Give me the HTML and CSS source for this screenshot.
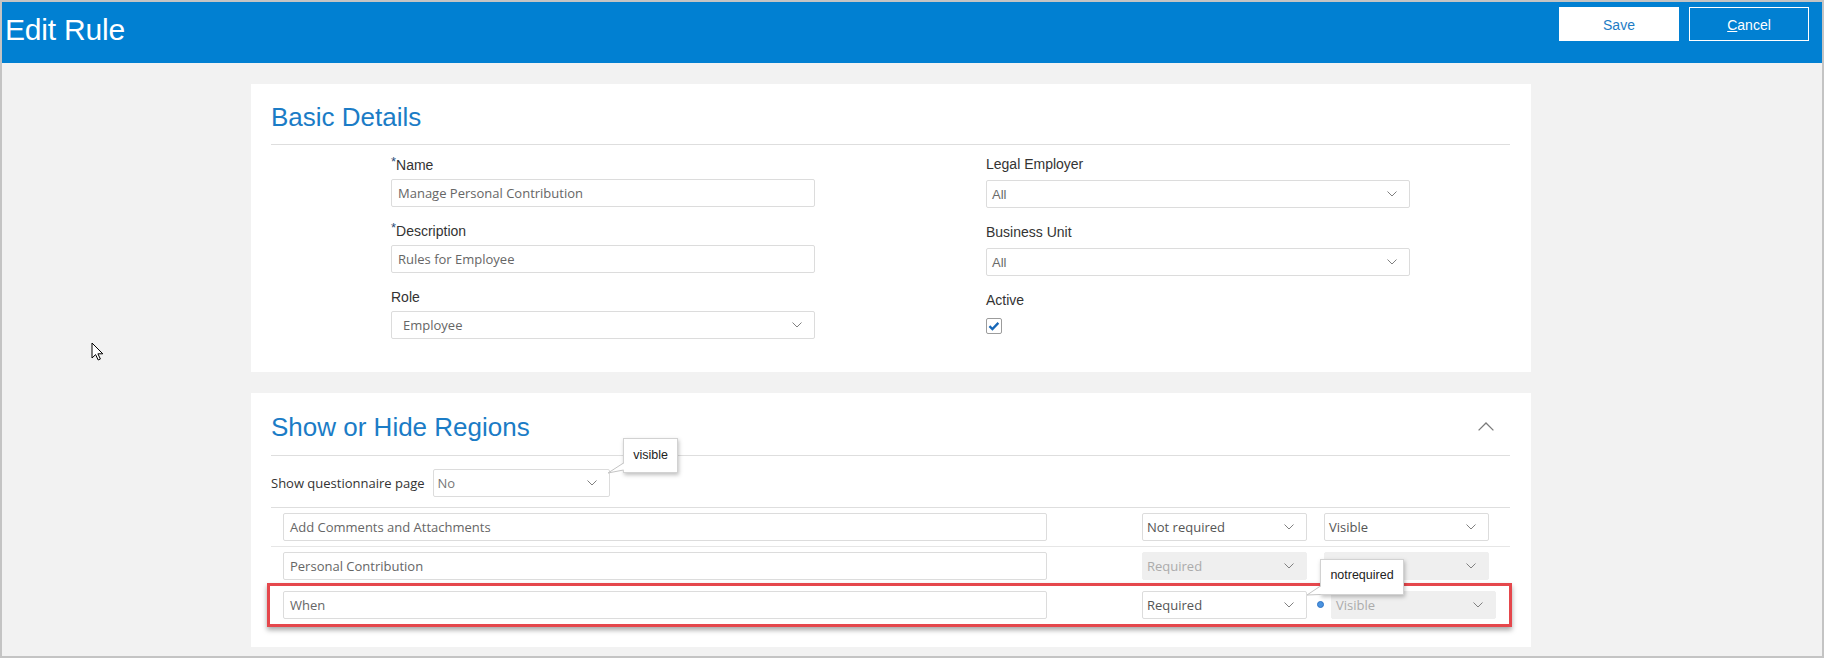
FILE: index.html
```html
<!DOCTYPE html>
<html lang="en">
<head>
<meta charset="utf-8">
<title>Edit Rule</title>
<link rel="stylesheet" href="styles.css">
</head>
<body>
<div class="frame">
  <header class="topbar">
    <h1 class="title">Edit Rule</h1>
    <div class="actions">
      <button class="btn btn-save">Save</button>
      <button class="btn btn-cancel"><span class="ul">C</span>ancel</button>
    </div>
  </header>

  <main class="content">
    <section class="card card-basic">
      <div class="card-head"><h2 class="card-title">Basic Details</h2></div>
      <div class="form-grid">
        <div class="col col-left">
          <div class="field">
            <label class="label"><span class="req">*</span>Name</label>
            <div class="input">Manage Personal Contribution</div>
          </div>
          <div class="field">
            <label class="label"><span class="req">*</span>Description</label>
            <div class="input">Rules for Employee</div>
          </div>
          <div class="field">
            <label class="label">Role</label>
            <div class="select select-role"><span>Employee</span>
              <svg class="chev" viewBox="0 0 10 6"><path d="M0.5 0.5 L5 5 L9.5 0.5"/></svg></div>
          </div>
        </div>
        <div class="col col-right">
          <div class="field">
            <label class="label">Legal Employer</label>
            <div class="select select-arial"><span>All</span>
              <svg class="chev" viewBox="0 0 10 6"><path d="M0.5 0.5 L5 5 L9.5 0.5"/></svg></div>
          </div>
          <div class="field">
            <label class="label">Business Unit</label>
            <div class="select select-arial"><span>All</span>
              <svg class="chev" viewBox="0 0 10 6"><path d="M0.5 0.5 L5 5 L9.5 0.5"/></svg></div>
          </div>
          <div class="field">
            <label class="label">Active</label>
            <div class="checkbox">
              <svg viewBox="0 0 16 16"><path d="M2.8 8.2 L6.2 11.6 L13 4.4"/></svg>
            </div>
          </div>
        </div>
      </div>
    </section>

    <section class="card card-regions">
      <div class="card-head head-flex">
        <h2 class="card-title">Show or Hide Regions</h2>
        <svg class="chev-up" viewBox="0 0 16 9"><path d="M0.6 8.4 L8 1 L15.4 8.4"/></svg>
      </div>

      <div class="q-row">
        <span class="q-label">Show questionnaire page</span>
        <div class="select select-q"><span>No</span>
          <svg class="chev" viewBox="0 0 10 6"><path d="M0.5 0.5 L5 5 L9.5 0.5"/></svg></div>
      </div>

      <div class="region-row">
        <div class="input region-name">Add Comments and Attachments</div>
        <div class="select select-sm"><span>Not required</span>
          <svg class="chev" viewBox="0 0 10 6"><path d="M0.5 0.5 L5 5 L9.5 0.5"/></svg></div>
        <div class="vis-cell">
          <div class="select select-sm"><span>Visible</span>
            <svg class="chev" viewBox="0 0 10 6"><path d="M0.5 0.5 L5 5 L9.5 0.5"/></svg></div>
        </div>
      </div>

      <div class="region-row">
        <div class="input region-name">Personal Contribution</div>
        <div class="select select-sm disabled"><span>Required</span>
          <svg class="chev" viewBox="0 0 10 6"><path d="M0.5 0.5 L5 5 L9.5 0.5"/></svg></div>
        <div class="vis-cell">
          <div class="select select-sm disabled"><span class="covered">Visible</span>
            <svg class="chev" viewBox="0 0 10 6"><path d="M0.5 0.5 L5 5 L9.5 0.5"/></svg></div>
        </div>
      </div>

      <div class="region-row last">
        <div class="input region-name">When</div>
        <div class="select select-sm"><span>Required</span>
          <svg class="chev" viewBox="0 0 10 6"><path d="M0.5 0.5 L5 5 L9.5 0.5"/></svg></div>
        <div class="vis-cell">
          <span class="dot"></span>
          <div class="select select-sm disabled"><span>Visible</span>
            <svg class="chev" viewBox="0 0 10 6"><path d="M0.5 0.5 L5 5 L9.5 0.5"/></svg></div>
        </div>
      </div>

      <div class="highlight"></div>

      <div class="tip tip-visible">
        <svg class="tail tail-visible" viewBox="0 0 18 14"><polygon class="tail-fill" points="1,12 17.5,2 17.5,9"/><polyline class="tail-line" points="16.5,2 1,12 16.5,9"/></svg>
        visible
      </div>
      <div class="tip tip-notreq">
        <svg class="tail tail-notreq" viewBox="0 0 16 13"><polygon class="tail-fill" points="1,11 15.5,2 15.5,10"/><polyline class="tail-line" points="14.5,2 1,11 14.5,10.5"/></svg>
        notrequired
      </div>
    </section>
  </main>

  <svg class="cursor" viewBox="0 0 13 19"><path d="M1 1 L1 16 L4.6 12.6 L7.2 18 L9.4 17 L6.9 11.8 L11.8 11.8 Z"/></svg>
</div>
</body>
</html>
```

FILE: styles.css
```css
* { box-sizing: border-box; }

html, body {
  margin: 0;
  padding: 0;
}

body {
  font-family: "Liberation Sans", Arial, sans-serif;
  color: #333;
}

.frame {
  position: relative;
  width: 1824px;
  height: 658px;
  border: 2px solid #c4c4c4;
  background: #f2f2f2;
  overflow: hidden;
}

/* ---------- top bar ---------- */
.topbar {
  height: 61px;
  background: #0180d2;
  display: flex;
  justify-content: space-between;
  align-items: flex-start;
  padding-right: 13px;
}

.title {
  margin: 0;
  padding: 13px 0 0 3px;
  font-size: 30px;
  line-height: 30px;
  font-weight: normal;
  color: #fff;
  letter-spacing: -0.2px;
}

.actions {
  display: flex;
  gap: 10px;
  margin-top: 5px;
}

.btn {
  width: 120px;
  height: 34px;
  font-family: "Liberation Sans", Arial, sans-serif;
  font-size: 14px;
  border: 1px solid #fff;
  border-radius: 0;
  padding: 1px 0 0;
  cursor: pointer;
}

.btn-save {
  background: #fff;
  color: #1e7cc4;
}

.btn-cancel {
  background: transparent;
  color: #fff;
}

.ul { text-decoration: underline; }

/* ---------- content ---------- */
.content {
  padding: 21px 0 0 249px;
  display: flex;
  flex-direction: column;
  gap: 21px;
}

.card {
  position: relative;
  width: 1280px;
  background: #fff;
  padding: 0 21px 0 20px;
}

.card-basic { height: 288px; }
.card-regions { height: 254px; }

.card-head {
  padding: 18px 0 12px;
  border-bottom: 1px solid #dedede;
}

.card-regions .card-head {
  padding: 19px 0 13px;
}

.head-flex {
  display: flex;
  justify-content: space-between;
  align-items: flex-start;
}

.card-title {
  margin: 0;
  font-size: 26px;
  line-height: 30px;
  font-weight: normal;
  color: #1b7cc6;
}

.chev-up {
  width: 16px;
  height: 9px;
  margin: 10px 16px 0 0;
}

.chev-up path {
  fill: none;
  stroke: #7a7a7a;
  stroke-width: 1.3;
}

/* ---------- basic details form ---------- */
.form-grid {
  display: grid;
  grid-template-columns: 424px 424px;
  column-gap: 171px;
  padding-left: 120px;
  align-items: start;
}

.col-left { margin-top: 12px; }
.col-right { margin-top: 11px; }

.field { margin-bottom: 16px; }

.label {
  display: block;
  font-size: 14px;
  line-height: 17px;
  color: #333;
}

.col-left .label { margin-bottom: 5px; }
.col-right .label { margin-bottom: 7px; }

.req {
  font-size: 13px;
  vertical-align: top;
  line-height: 13px;
  position: relative;
  top: -2px;
  color: #2b4d78;
}

.input,
.select {
  height: 28px;
  border: 1px solid #dcdcdc;
  border-radius: 2px;
  background: #fff;
  font-family: "Open Sans", "Noto Sans", sans-serif;
  font-size: 13px;
  color: #666;
  display: flex;
  align-items: center;
  padding: 0 6px;
  white-space: nowrap;
}

.select {
  justify-content: space-between;
  padding: 0 12px 0 5px;
}

.select-role { padding-left: 11px; }

.select-arial {
  font-family: "Liberation Sans", Arial, sans-serif;
  color: #6a6a6a;
}

.chev {
  width: 10px;
  height: 6px;
  flex: none;
}

.chev path {
  fill: none;
  stroke: #808080;
  stroke-width: 1;
}

.checkbox {
  width: 16px;
  height: 16px;
  margin-top: 9px;
  border: 1px solid #9c9c9c;
  border-radius: 2px;
  background: #fff;
}

.checkbox svg {
  display: block;
  width: 14px;
  height: 14px;
}

.checkbox path {
  fill: none;
  stroke: #1767b8;
  stroke-width: 2.6;
}

/* ---------- regions ---------- */
.q-row {
  display: flex;
  align-items: center;
  gap: 8px;
  padding: 13px 0 10px;
  border-bottom: 1px solid #dedede;
}

.q-label {
  font-family: "Open Sans", "Noto Sans", sans-serif;
  font-size: 13px;
  color: #333;
}

.select-q {
  width: 177px;
  padding-left: 4px;
  color: #777;
}

.region-row {
  display: flex;
  align-items: center;
  padding: 5px 0 5px 12px;
  border-bottom: 1px solid #e6e6e6;
}

.region-row.last { border-bottom: none; }

.region-name {
  width: 764px;
  color: #666;
}

.select-sm {
  width: 165px;
  margin-left: 95px;
  color: #555;
  padding-left: 4px;
}

.vis-cell {
  display: flex;
  align-items: center;
  margin-left: 17px;
}

.vis-cell .select-sm { margin-left: 0; }

.select.disabled {
  background: #efefef;
  border-color: #efefef;
  color: #ababab;
}

.covered { visibility: hidden; }

.dot {
  width: 7px;
  height: 7px;
  border-radius: 50%;
  background: #4a93e0;
  border: 1px solid #2f74c4;
  margin: -2px 0 0 -7px;
  flex: none;
}

.vis-cell .dot + .select-sm { margin-left: 7px; }

/* ---------- overlays ---------- */
.highlight {
  position: absolute;
  left: 16px;
  top: 190px;
  width: 1245px;
  height: 44px;
  border: 3px solid #e5474c;
  box-shadow: 0 3px 5px rgba(0, 0, 0, 0.35);
  pointer-events: none;
}

.tip {
  position: absolute;
  z-index: 2;
  background: #fff;
  border: 1px solid #d2d2d2;
  box-shadow: 1px 2px 4px rgba(0, 0, 0, 0.25);
  font-family: "Liberation Sans", Arial, sans-serif;
  font-size: 12.5px;
  color: #222;
  display: flex;
  align-items: center;
  justify-content: center;
}

.tip-visible {
  left: 372px;
  top: 45px;
  width: 55px;
  height: 35px;
  padding-bottom: 1px;
}

.tip-notreq {
  left: 1069px;
  top: 166px;
  width: 84px;
  height: 36px;
  padding-bottom: 4px;
}

.tail {
  position: absolute;
  overflow: visible;
}

.tail-visible {
  left: -17px;
  top: 22px;
  width: 18px;
  height: 14px;
}

.tail-notreq {
  left: -15px;
  top: 24px;
  width: 16px;
  height: 13px;
}

.tail-fill { fill: #fff; }

.tail-line {
  fill: none;
  stroke: #c4c4c4;
  stroke-width: 1;
}

.cursor {
  position: absolute;
  left: 89px;
  top: 340px;
  width: 13px;
  height: 19px;
}

.cursor path {
  fill: #fff;
  stroke: #000;
  stroke-width: 1;
  stroke-linejoin: miter;
}
```
